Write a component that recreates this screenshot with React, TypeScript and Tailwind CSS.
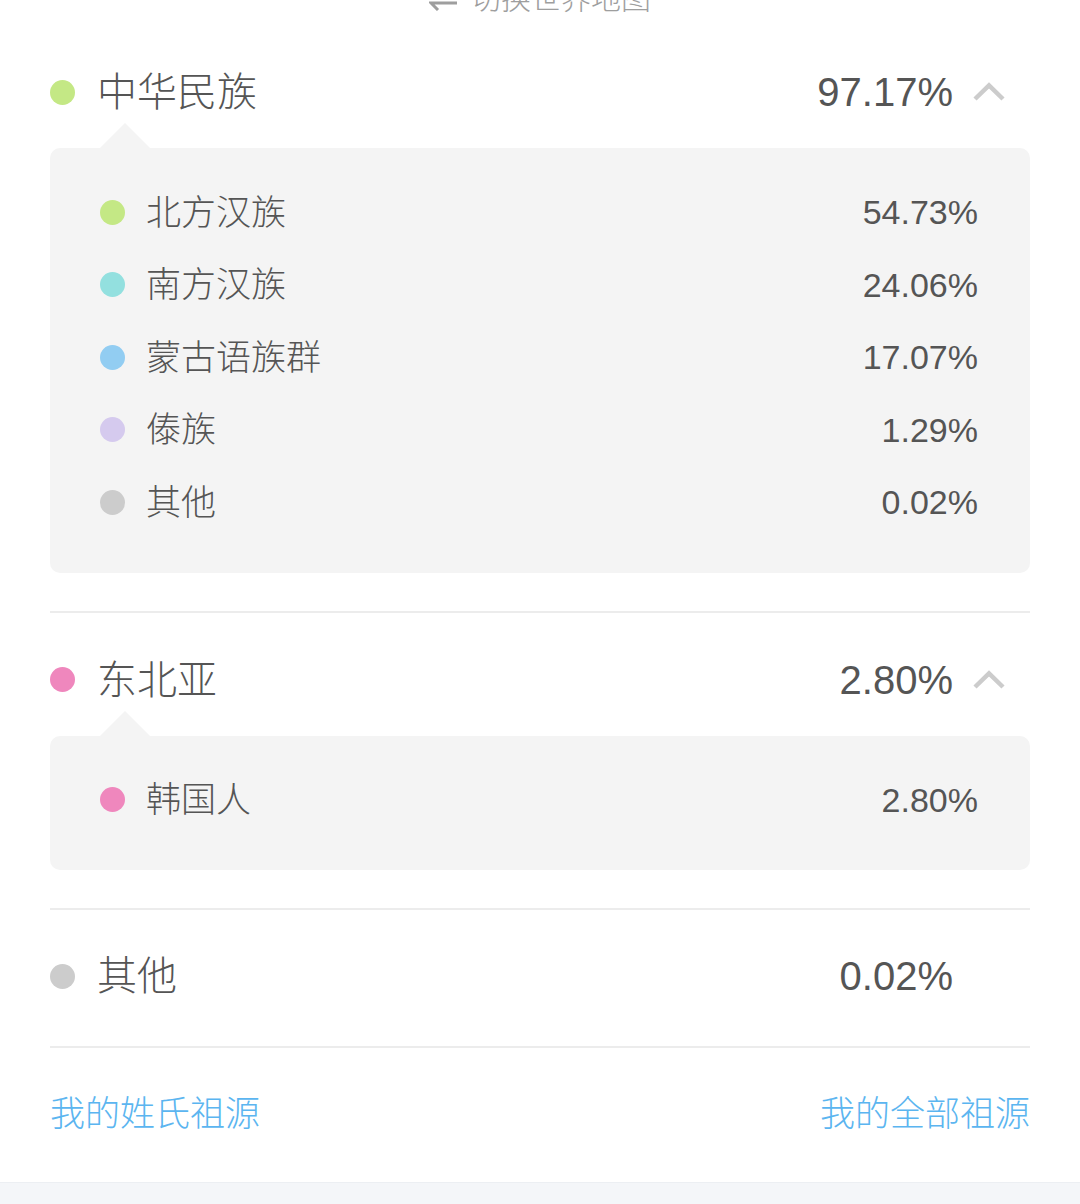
import React from "react";

const FONT = { fontFamily: '"Liberation Sans", "Noto Sans CJK SC", sans-serif' };
const CJK = { fontFamily: '"Noto Sans CJK SC", sans-serif' };

interface Sub {
  name: string;
  value: string;
  color: string;
}

interface Group {
  name: string;
  value: string;
  color: string;
  subs?: Sub[];
}

const groups: Group[] = [
  {
    name: "中华民族",
    value: "97.17%",
    color: "#c4e885",
    subs: [
      { name: "北方汉族", value: "54.73%", color: "#c4e885" },
      { name: "南方汉族", value: "24.06%", color: "#93e0df" },
      { name: "蒙古语族群", value: "17.07%", color: "#92cdf2" },
      { name: "傣族", value: "1.29%", color: "#d5caee" },
      { name: "其他", value: "0.02%", color: "#cccccc" },
    ],
  },
  {
    name: "东北亚",
    value: "2.80%",
    color: "#ef87bd",
    subs: [{ name: "韩国人", value: "2.80%", color: "#ef87bd" }],
  },
  { name: "其他", value: "0.02%", color: "#cccccc" },
];

function Chevron() {
  return (
    <svg width="34" height="22" viewBox="0 0 34 22" fill="none">
      <path d="M3 18 L17 4.5 L31 18" stroke="#cccccc" strokeWidth="4.5" />
    </svg>
  );
}

function SwapIcon() {
  return (
    <svg width="30" height="30" viewBox="0 0 30 30" fill="none" className="mr-[12px]">
      <path d="M2 12 H28 L21 5" stroke="#9e9e9e" strokeWidth="3" />
      <path d="M28 22 H2 L9 29" stroke="#9e9e9e" strokeWidth="3" />
    </svg>
  );
}

function GroupBlock({ g }: { g: Group }) {
  return (
    <div className={g.subs ? "pt-[27px] pb-[38px] border-b-2 border-[#ececec]" : "pt-[26px] pb-[30px] border-b-2 border-[#ececec]"}>
      <div className="h-[80px] flex items-center pr-[24px]">
        <span className="w-[25px] h-[25px] rounded-full shrink-0" style={{ background: g.color }} />
        <span className="ml-[22px] mb-[6px] text-[40px] text-[#555555] leading-none font-light" style={CJK}>
          {g.name}
        </span>
        <span className="ml-auto text-[40px] text-[#555555] leading-none">{g.value}</span>
        <span className="ml-[19px] w-[34px] flex items-center">{g.subs ? <Chevron /> : null}</span>
      </div>
      {g.subs && (
        <div className="relative mt-[16px] bg-[#f4f4f4] rounded-[10px] pt-[28px] pb-[34px] pl-[50px] pr-[52px]">
          <div className="absolute -top-[25px] left-[50px] w-0 h-0 border-x-[25px] border-x-transparent border-b-[25px] border-b-[#f4f4f4]" />
          {g.subs.map((s) => (
            <div key={s.name} className="h-[72.5px] flex items-center">
              <span className="w-[25px] h-[25px] rounded-full shrink-0" style={{ background: s.color }} />
              <span className="ml-[21px] mb-[6px] text-[35px] text-[#555555] leading-none font-light" style={CJK}>
                {s.name}
              </span>
              <span className="ml-auto text-[34px] text-[#555555] leading-none">{s.value}</span>
            </div>
          ))}
        </div>
      )}
    </div>
  );
}

export default function App() {
  return (
    <div className="w-[1080px] h-[1204px] bg-white overflow-hidden flex flex-col" style={FONT}>
      <div className="h-[25px] flex justify-center items-start">
        <div className="-mt-[19px] h-[30px] flex items-center text-[30px] leading-[30px] text-[#9e9e9e] font-light" style={CJK}>
          <SwapIcon />
          切换世界地图
        </div>
      </div>
      <div className="px-[50px]">
        {groups.map((g, i) => (
          <GroupBlock key={g.name + i} g={g} />
        ))}
        <div className="h-[134px] pb-[10px] flex items-center justify-between text-[35px] text-[#5bb5f0] leading-none font-light" style={CJK}>
          <span>我的姓氏祖源</span>
          <span>我的全部祖源</span>
        </div>
      </div>
      <div className="flex-1 bg-[#f4f6f9] border-t border-[#eceff3]" />
    </div>
  );
}
